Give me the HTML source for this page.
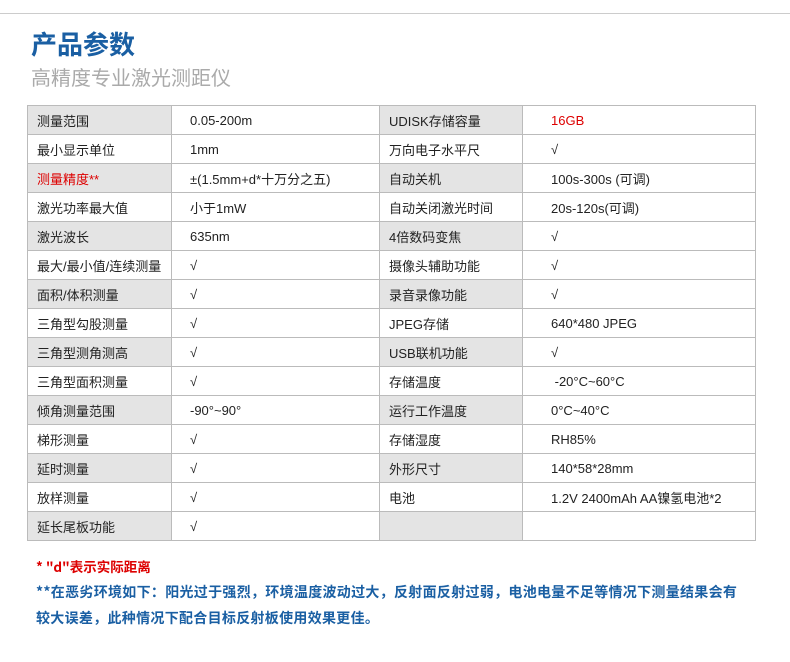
<!DOCTYPE html>
<html><head><meta charset="utf-8"><style>
body{margin:0;width:790px;height:662px;background:#fff;font-family:"Liberation Sans","Noto Sans CJK SC",sans-serif;position:relative;overflow:hidden}
.line{position:absolute;left:0;top:13px;width:790px;height:1px;background:#ccc}
h1{position:absolute;left:31px;top:25px;margin:0;font-size:26px;color:#1a5fa3;font-weight:bold;font-family:"Noto Sans CJK SC",sans-serif}
h2{position:absolute;left:31px;top:62px;margin:0;font-size:20px;color:#aaa;font-weight:normal;font-family:"Noto Sans CJK SC",sans-serif}
table{position:absolute;left:27px;top:105px;border-collapse:collapse;font-size:13px;color:#222;font-family:"Liberation Sans","Noto Sans CJK SC",sans-serif}
td{border:1px solid #bbb;height:29px;padding:0 0 0 9px;box-sizing:border-box;white-space:nowrap}
td.a{width:144px}td.b{width:208px;padding-left:18px}td.c{width:143px}td.d{width:233px;padding-left:28px}
tr:nth-child(odd) td.a,tr:nth-child(odd) td.c{background:#e4e4e4}
.r{color:#d00}
.n1{position:absolute;left:36px;top:556px;font-size:13.5px;color:#d00;font-weight:bold;font-family:"Noto Sans CJK SC",sans-serif}
.n2{position:absolute;left:36px;top:579px;font-size:14px;letter-spacing:0.3px;color:#1a5fa3;font-weight:bold;line-height:26px;width:760px;white-space:nowrap;font-family:"Noto Sans CJK SC",sans-serif}
</style></head><body>
<div class="line"></div>
<h1>产品参数</h1>
<h2>高精度专业激光测距仪</h2>
<table>
<tr><td class="a">测量范围</td><td class="b">0.05-200m</td><td class="c">UDISK存储容量</td><td class="d r">16GB</td></tr>
<tr><td class="a">最小显示单位</td><td class="b">1mm</td><td class="c">万向电子水平尺</td><td class="d">√</td></tr>
<tr><td class="a r">测量精度**</td><td class="b">±(1.5mm+d*十万分之五)</td><td class="c">自动关机</td><td class="d">100s-300s (可调)</td></tr>
<tr><td class="a">激光功率最大值</td><td class="b">小于1mW</td><td class="c">自动关闭激光时间</td><td class="d">20s-120s(可调)</td></tr>
<tr><td class="a">激光波长</td><td class="b">635nm</td><td class="c">4倍数码变焦</td><td class="d">√</td></tr>
<tr><td class="a">最大/最小值/连续测量</td><td class="b">√</td><td class="c">摄像头辅助功能</td><td class="d">√</td></tr>
<tr><td class="a">面积/体积测量</td><td class="b">√</td><td class="c">录音录像功能</td><td class="d">√</td></tr>
<tr><td class="a">三角型勾股测量</td><td class="b">√</td><td class="c">JPEG存储</td><td class="d">640*480 JPEG</td></tr>
<tr><td class="a">三角型测角测高</td><td class="b">√</td><td class="c">USB联机功能</td><td class="d">√</td></tr>
<tr><td class="a">三角型面积测量</td><td class="b">√</td><td class="c">存储温度</td><td class="d">&nbsp;-20°C~60°C</td></tr>
<tr><td class="a">倾角测量范围</td><td class="b">-90°~90°</td><td class="c">运行工作温度</td><td class="d">0°C~40°C</td></tr>
<tr><td class="a">梯形测量</td><td class="b">√</td><td class="c">存储湿度</td><td class="d">RH85%</td></tr>
<tr><td class="a">延时测量</td><td class="b">√</td><td class="c">外形尺寸</td><td class="d">140*58*28mm</td></tr>
<tr><td class="a">放样测量</td><td class="b">√</td><td class="c">电池</td><td class="d">1.2V 2400mAh AA镍氢电池*2</td></tr>
<tr><td class="a">延长尾板功能</td><td class="b">√</td><td class="c"></td><td class="d"></td></tr>
</table>
<div class="n1">* "d"表示实际距离</div>
<div class="n2">**在恶劣环境如下：阳光过于强烈，环境温度波动过大，反射面反射过弱，电池电量不足等情况下测量结果会有<br>较大误差，此种情况下配合目标反射板使用效果更佳。</div>
</body></html>
